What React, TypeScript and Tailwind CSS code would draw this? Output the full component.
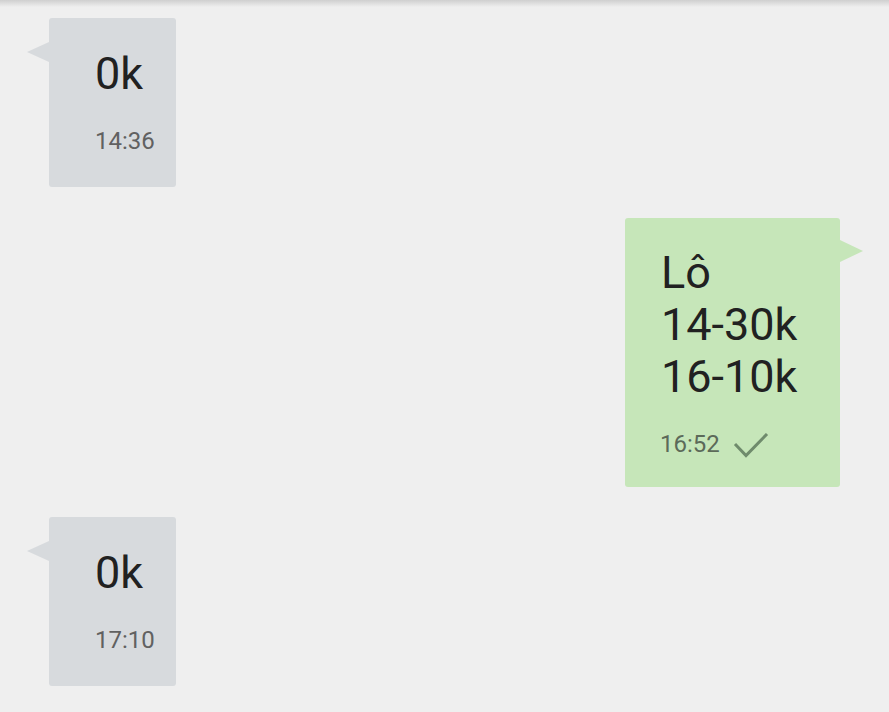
import React from 'react';

const font = { fontFamily: 'Roboto, "Noto Sans", sans-serif' };

function Check() {
  return (
    <svg width="36" height="26" viewBox="0 0 36 26" className="ml-[13px] mt-[2px]">
      <path d="M2 11 L13 22.5 L34 1" fill="none" stroke="#6f8b6c" strokeWidth="3" />
    </svg>
  );
}

function Incoming({ text, time }: { text: string; time: string }) {
  return (
    <div className="relative ml-[49px] w-[127px] rounded-[3px] bg-[#d7dadd] pl-[46px] pr-[18px] pt-[30px] pb-[31px]">
      <div className="absolute left-[-22px] top-[24px] h-0 w-0 border-y-[10px] border-r-[22px] border-y-transparent border-r-[#d7dadd]" />
      <div className="text-[45px] leading-[52px] text-[#212121]">{text}</div>
      <div className="mt-[27px] text-[24px] leading-[29px] text-[#616161]">{time}</div>
    </div>
  );
}

function Outgoing({ lines, time }: { lines: string[]; time: string }) {
  return (
    <div className="relative mr-[49px] w-[215px] self-end rounded-[3px] bg-[#c6e6b9] pl-[35px] pr-[20px] pt-[29px] pb-[28px]">
      <div className="absolute right-[-23px] top-[22px] h-0 w-0 border-y-[11px] border-l-[23px] border-y-transparent border-l-[#c6e6b9]" />
      {lines.map((l) => (
        <div key={l} className="pl-[1px] text-[45px] leading-[52px] text-[#212121]">
          {l}
        </div>
      ))}
      <div className="mt-[27px] flex items-center text-[24px] leading-[29px] text-[#5c6a59]">
        <span>{time}</span>
        <Check />
      </div>
    </div>
  );
}

export default function App() {
  return (
    <div className="relative flex h-[712px] w-[889px] flex-col overflow-hidden bg-[#efefef]" style={font}>
      <div className="absolute inset-x-0 top-0 h-[7px] bg-gradient-to-b from-[#cfcfcf] to-transparent" />
      <div className="mt-[18px] flex flex-col">
        <Incoming text="0k" time="14:36" />
        <div className="mt-[31px] flex flex-col">
          <Outgoing lines={['Lô', '14-30k', '16-10k']} time="16:52" />
        </div>
        <div className="mt-[30px]">
          <Incoming text="0k" time="17:10" />
        </div>
      </div>
    </div>
  );
}
